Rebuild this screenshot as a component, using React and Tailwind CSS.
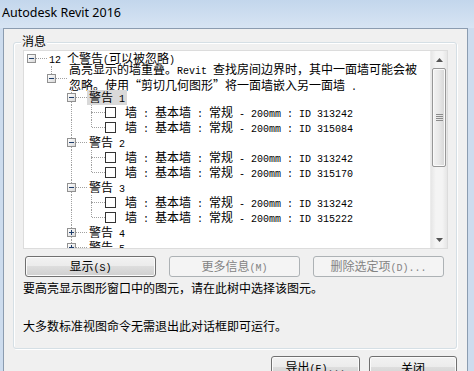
import React from 'react'

const cjk = "[font-family:'Noto_Sans_CJK_SC',sans-serif] text-[12px]"
const mono = "[font-family:'Liberation_Mono','Noto_Sans_CJK_SC',monospace] text-[10px] whitespace-pre"

// SimSun-like mix: ascii runs are half width, cjk runs full width
function Txt({ s }) {
  const parts = s.split(/([\x20-\x7E]+)/).filter(Boolean)
  return parts.map((p, i) =>
    /^[\x20-\x7E]+$/.test(p)
      ? <span key={i} className={mono}>{p}</span>
      : <span key={i} className={cjk}>{p}</span>
  )
}

function Expander({ plus }) {
  return (
    <div className="relative z-10 w-[9px] h-[9px] border border-[#919191] bg-[linear-gradient(135deg,#ffffff,#d9d9d9)] flex items-center justify-center">
      <div className="absolute left-[1px] top-[3px] w-[5px] h-[1px] bg-[#1e3d6b]" />
      {plus && <div className="absolute left-[3px] top-[1px] w-[1px] h-[5px] bg-[#1e3d6b]" />}
    </div>
  )
}

const dot = 'border-[#a0a0a0] border-dotted'

function Row({ level, tall, full = [], top, bottom, exp, plus, check, selected, children }) {
  const cols = []
  for (let c = 0; c < level; c++) {
    cols.push(
      <div key={c} className="relative w-[20px] self-stretch shrink-0">
        {full.includes(c) && <div className={`absolute left-[7px] top-0 bottom-0 border-l ${dot}`} />}
      </div>
    )
  }
  return (
    <div className={`flex items-center ${tall ? 'h-[24px]' : 'h-[15px]'}`}>
      {cols}
      <div className={`relative self-stretch shrink-0 flex items-center pl-[3px] ${check ? 'w-[21px]' : 'w-[23px]'}`}>
        {top && <div className={`absolute left-[7px] top-0 border-l ${dot} ${tall ? 'h-[12px]' : 'h-[7px]'}`} />}
        {bottom && <div className={`absolute left-[7px] bottom-0 border-l ${dot} ${tall ? 'top-[12px]' : 'top-[7px]'}`} />}
        <div className={`absolute left-[8px] right-0 border-t ${dot} ${tall ? 'top-[12px]' : 'top-[7px]'}`} />
        {exp && <Expander plus={plus} />}
      </div>
      {check && <div className="w-[11px] h-[11px] border border-[#333] bg-white shrink-0 mr-[9px]" />}
      <div className={`self-stretch flex flex-col justify-center px-[2px] whitespace-nowrap ${tall ? 'leading-[12px]' : 'leading-[13px]'} ${check ? '-ml-[2px]' : ''} ${selected ? 'bg-[#d9d9d9]' : ''}`}>
        {children}
      </div>
    </div>
  )
}

function Warning({ n, ids, first }) {
  return (
    <>
      <Row level={2} top bottom exp selected={first}><div><Txt s={`警告 ${n}`} /></div></Row>
      <Row level={3} full={[2]} top bottom check><div><Txt s={`墙 : 基本墙 : 常规 - 200mm : ID ${ids[0]}`} /></div></Row>
      <Row level={3} full={[2]} top check><div><Txt s={`墙 : 基本墙 : 常规 - 200mm : ID ${ids[1]}`} /></div></Row>
    </>
  )
}

function Arrow({ down }) {
  return (
    <svg width="7" height="4" viewBox="0 0 7 4">
      <path d={down ? 'M0 0H7L3.5 4Z' : 'M0 4H7L3.5 0Z'} fill="#555" />
    </svg>
  )
}

function Scrollbar() {
  return (
    <div className="w-[17px] self-stretch flex flex-col bg-[linear-gradient(90deg,#e6e6e6,#f4f4f4_30%,#f4f4f4_70%,#e6e6e6)] border-l border-[#ececec]">
      <div className="h-[17px] flex items-center justify-center"><Arrow /></div>
      <div className="h-[99px] mx-[1px] rounded-[2px] border border-[#979797] bg-[linear-gradient(90deg,#f3f3f3,#e8e8e8_50%,#d6d6d6)] shadow-[inset_0_0_0_1px_#fafafa] flex flex-col items-center justify-center gap-[1px]">
        <div className="w-[7px] h-[1px] bg-[#8c8c8c]" />
        <div className="w-[7px] h-[1px] bg-[#8c8c8c]" />
        <div className="w-[7px] h-[1px] bg-[#8c8c8c]" />
        <div className="w-[7px] h-[1px] bg-[#8c8c8c]" />
      </div>
      <div className="flex-1" />
      <div className="h-[17px] flex items-center justify-center"><Arrow down /></div>
    </div>
  )
}

function Button({ w, disabled, children }) {
  return (
    <div
      className={`${w} h-[21px] shrink-0 rounded-[3px] border flex items-center justify-center ${
        disabled
          ? 'border-[#adb2b5] bg-[#f4f4f4] text-[#838383]'
          : 'border-[#707070] bg-[linear-gradient(#f2f2f2,#ebebeb_50%,#dddddd_50%,#cfcfcf)] shadow-[inset_0_0_0_1px_#fbfbfb] text-black'
      }`}
    >
      <span className="leading-[13px]">{children}</span>
    </div>
  )
}

export default function App() {
  return (
    <div className="w-[474px] h-[371px] overflow-hidden flex flex-col bg-[#cddcee]">
      {/* Title bar */}
      <div className="h-[28px] shrink-0 flex items-center pl-[2px] bg-[linear-gradient(#c3d6ec,#d7e4f3)]">
        <span className="[font-family:'Noto_Sans',sans-serif] text-[12.5px] text-black -mt-[1px]">Autodesk Revit 2016</span>
      </div>

      <div className="flex-1 flex pl-[3px] pr-[6px]">
        <div className="flex-1 bg-[#f0f0f0] border-l border-t border-r border-[#8b9cb0] pl-[9px] pr-[10px] pt-[13px] flex flex-col">
          {/* Group box 消息 */}
          <div className="relative w-[444px] h-[307px] shrink-0 rounded-[3px] border border-[#d5dfe5] shadow-[inset_1px_1px_0_#ffffff,1px_1px_0_#ffffff] pl-[9px] pt-[7px] flex flex-col">
            <div className="absolute -top-[10px] left-[7px] px-[1px] bg-[#f0f0f0] leading-[15px]"><Txt s="消息" /></div>

            {/* Tree */}
            <div className="w-[425px] h-[199px] bg-white border border-[#dcdcdc] flex overflow-hidden">
              <div className="flex-1 overflow-hidden text-black">
                <Row level={0} exp><div><Txt s="12 个警告(可以被忽略)" /></div></Row>
                <Row level={1} tall top exp>
                  <div><Txt s="高亮显示的墙重叠。Revit 查找房间边界时，其中一面墙可能会被" /></div>
                  <div><Txt s="忽略。使用“剪切几何图形”将一面墙嵌入另一面墙 ." /></div>
                </Row>
                <Warning n={1} ids={['313242', '315084']} first />
                <Warning n={2} ids={['313242', '315170']} />
                <Warning n={3} ids={['313242', '315222']} />
                <Row level={2} top bottom exp plus><div><Txt s="警告 4" /></div></Row>
                <Row level={2} top bottom exp plus><div><Txt s="警告 5" /></div></Row>
              </div>
              <Scrollbar />
            </div>

            {/* Actions */}
            <div className="flex gap-[13px] mt-[7px] ml-[2px]">
              <Button w="w-[131px]"><Txt s="显示(S)" /></Button>
              <Button w="w-[131px]" disabled><Txt s="更多信息(M)" /></Button>
              <Button w="w-[131px]" disabled><Txt s="删除选定项(D)..." /></Button>
            </div>

            <div className="mt-[3px] leading-[14px]"><Txt s="要高亮显示图形窗口中的图元，请在此树中选择该图元。" /></div>
            <div className="mt-[23px] leading-[14px]"><Txt s="大多数标准视图命令无需退出此对话框即可运行。" /></div>
          </div>

          {/* Bottom buttons */}
          <div className="flex justify-end gap-[9px] mt-[7px]">
            <div className="w-[89px] h-[23px] rounded-[3px] border border-[#707070] bg-[linear-gradient(#f2f2f2,#ebebeb_50%,#dddddd_50%,#cfcfcf)] shadow-[inset_0_0_0_1px_#fbfbfb] flex items-center justify-center">
              <span className="leading-[13px]"><Txt s="导出(E)..." /></span>
            </div>
            <div className="w-[88px] h-[23px] rounded-[3px] border border-[#707070] bg-[linear-gradient(#f2f2f2,#ebebeb_50%,#dddddd_50%,#cfcfcf)] shadow-[inset_0_0_0_1px_#fbfbfb] flex items-center justify-center">
              <span className="leading-[13px]"><Txt s="关闭" /></span>
            </div>
          </div>
        </div>
      </div>
    </div>
  )
}
